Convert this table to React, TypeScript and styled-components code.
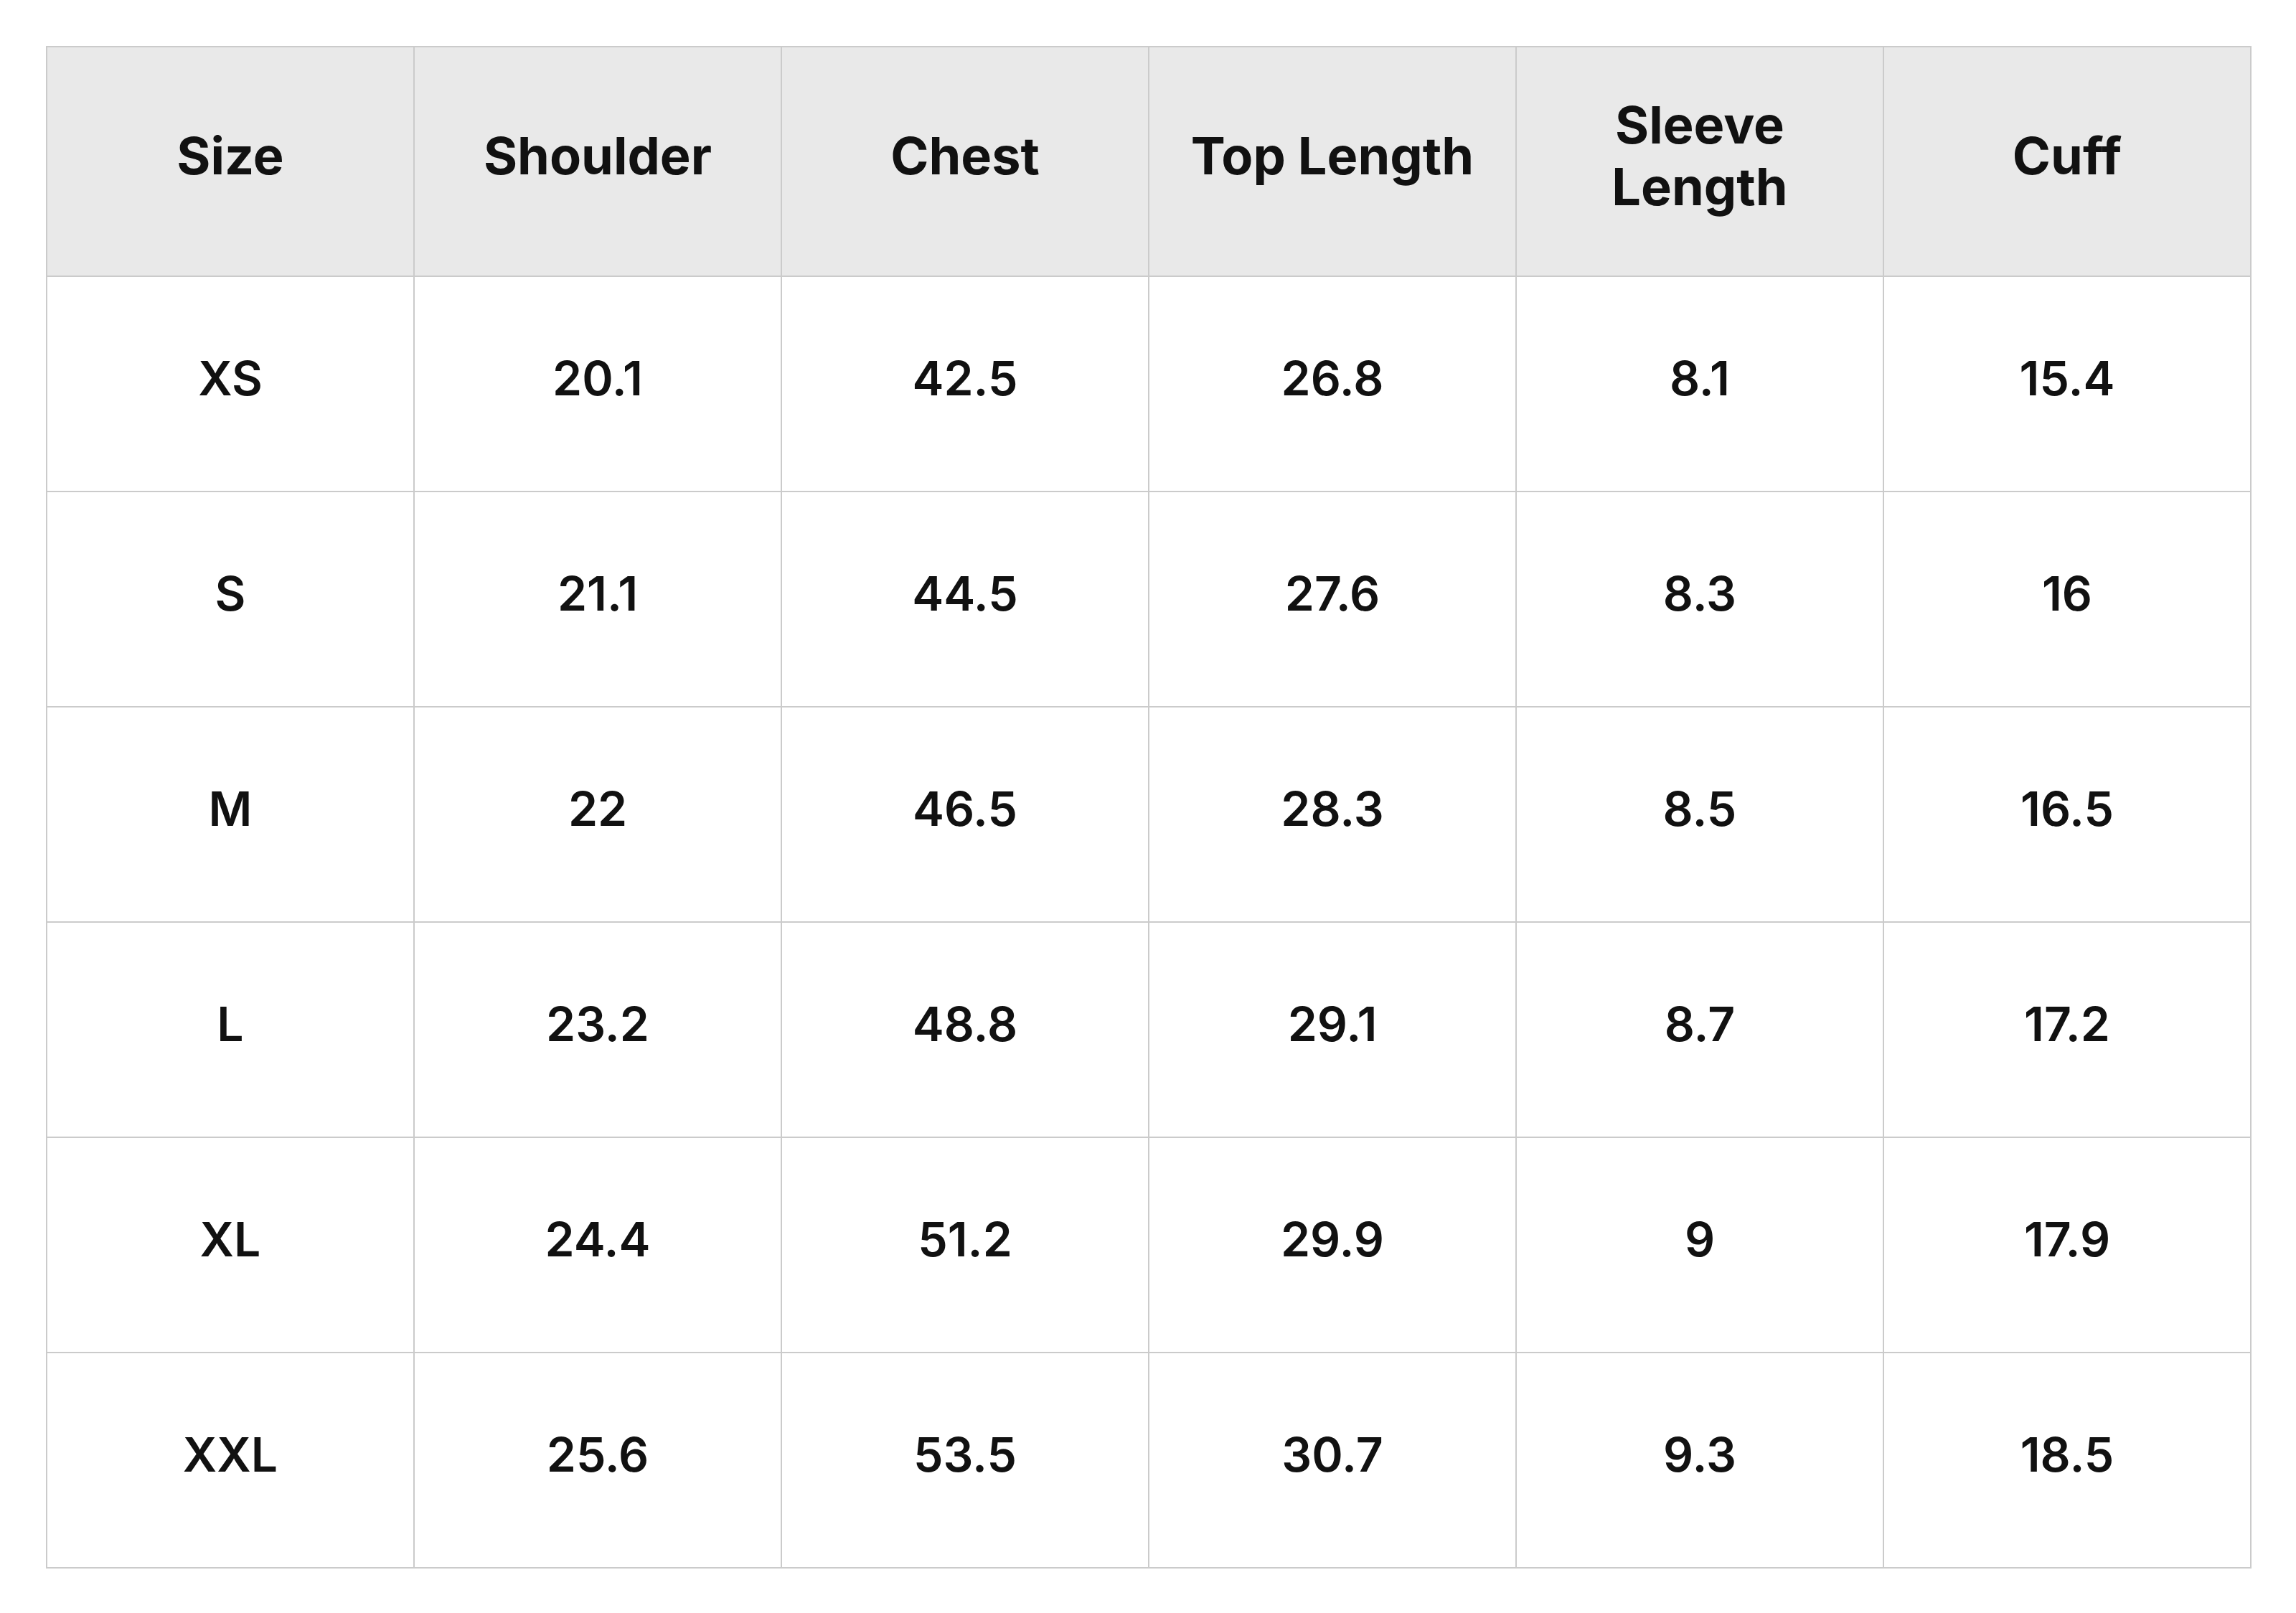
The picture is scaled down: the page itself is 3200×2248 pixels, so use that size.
import React from "react";
import styled, { createGlobalStyle } from "styled-components";

const GlobalStyle = createGlobalStyle`
  html, body {
    margin: 0;
    padding: 0;
    background: #ffffff;
  }
  body {
    font-family: Inter, "Noto Sans", "Liberation Sans", sans-serif;
    color: #111111;
  }
`;

const Page = styled.div`
  padding: 64px;
  background: #ffffff;
`;

const Table = styled.table`
  width: 3074px;
  table-layout: fixed;
  border-collapse: collapse;
  border: 2px solid #cbcbcb;
`;

const HeadRow = styled.tr`
  height: 320px;
  background: #e9e9e9;
`;

const BodyRow = styled.tr`
  height: 300px;
  background: #ffffff;
`;

const HeadCell = styled.th`
  border: 2px solid #cbcbcb;
  padding: 0 32px 16px;
  text-align: center;
  vertical-align: middle;
  font-size: 72px;
  line-height: 86px;
  font-weight: 700;
  color: #111111;
`;

const Cell = styled.td`
  border: 2px solid #cbcbcb;
  padding: 0 32px 16px;
  text-align: center;
  vertical-align: middle;
  font-size: 66px;
  line-height: 84px;
  font-weight: 600;
  color: #111111;
`;

const headers = ["Size", "Shoulder", "Chest", "Top Length", "Sleeve Length", "Cuff"];

const rows: string[][] = [
  ["XS", "20.1", "42.5", "26.8", "8.1", "15.4"],
  ["S", "21.1", "44.5", "27.6", "8.3", "16"],
  ["M", "22", "46.5", "28.3", "8.5", "16.5"],
  ["L", "23.2", "48.8", "29.1", "8.7", "17.2"],
  ["XL", "24.4", "51.2", "29.9", "9", "17.9"],
  ["XXL", "25.6", "53.5", "30.7", "9.3", "18.5"],
];

export default function App() {
  return (
    <Page>
      <GlobalStyle />
      <Table>
        <thead>
          <HeadRow>
            {headers.map((h) => (
              <HeadCell key={h}>{h}</HeadCell>
            ))}
          </HeadRow>
        </thead>
        <tbody>
          {rows.map((r) => (
            <BodyRow key={r[0]}>
              {r.map((v, i) => (
                <Cell key={i}>{v}</Cell>
              ))}
            </BodyRow>
          ))}
        </tbody>
      </Table>
    </Page>
  );
}
